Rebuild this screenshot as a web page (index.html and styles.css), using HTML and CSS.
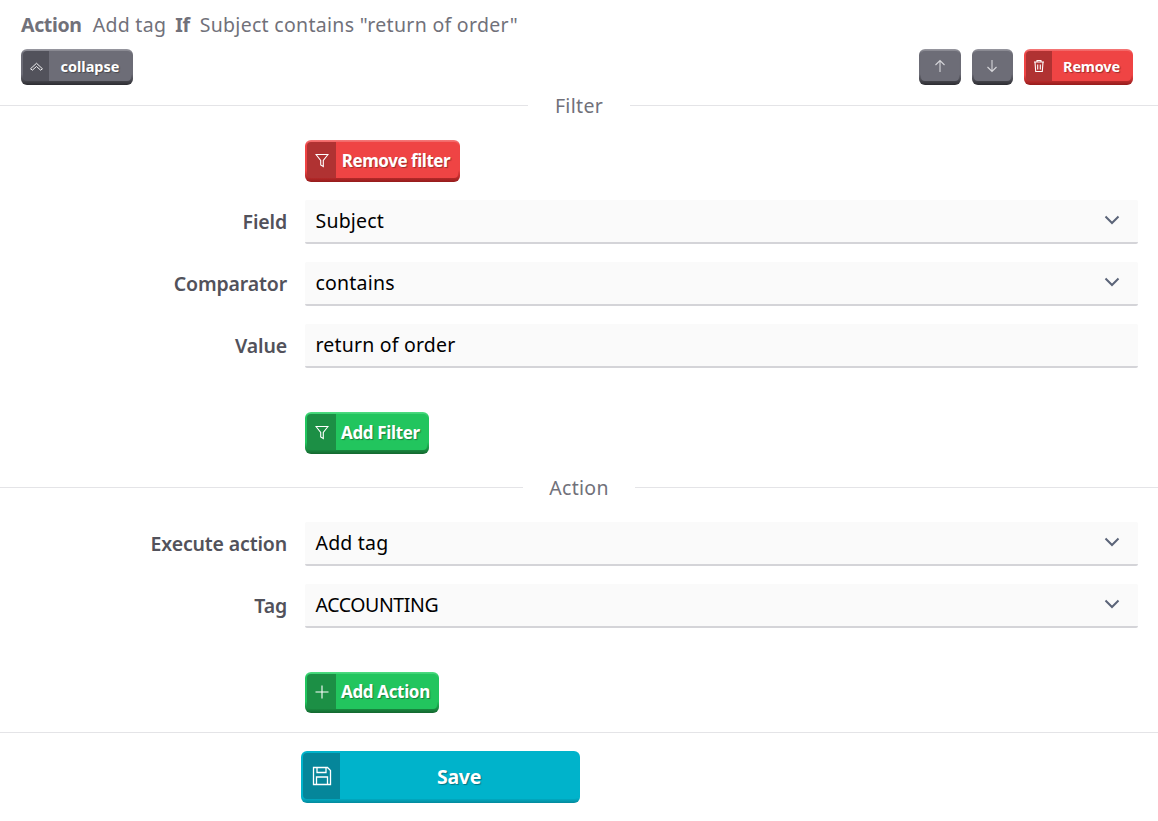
FILE: index.html
```html
<!DOCTYPE html>
<html lang="en">
<head>
<meta charset="utf-8">
<title>Action</title>
<link rel="stylesheet" href="styles.css">
</head>
<body>
<header class="head">
  <div class="summary"><b>Action</b><span>Add tag</span><b>If</b><span>Subject contains "return of order"</span></div>
  <div class="toolbar">
    <button class="btn gray small collapse"><span class="ico"><svg width="15" height="11" viewBox="0 0 16 12"><path d="M1.500 8.500 8 2.500l6.500 6-2 1.500L8 6l-4.500 4z" fill="none" stroke="#fff" stroke-width="1"/></svg></span><span class="txt">collapse</span></button>
    <div class="actions">
      <button class="btn gray small square"><span class="txt"><svg width="12" height="14" viewBox="0 0 12 14"><path d="M6 13V1.500M1.500 6 6 1.500 10.500 6" fill="none" stroke="#d6d6da" stroke-width="1.100"/></svg></span></button>
      <button class="btn gray small square"><span class="txt"><svg width="12" height="14" viewBox="0 0 12 14"><path d="M6 1v11.500M1.500 8 6 12.500 10.500 8" fill="none" stroke="#d6d6da" stroke-width="1.100"/></svg></span></button>
      <button class="btn red small remove"><span class="ico"><svg width="12" height="14" viewBox="0 0 12 14"><path d="M1 3h10M4 3V1.500h4V3M2 3l.7 9.500h6.600L10 3M4.700 5.500v5M7.300 5.500v5" fill="none" stroke="#fff" stroke-width="1.100"/></svg></span><span class="txt">Remove</span></button>
    </div>
  </div>
</header>

<div class="divider first"><span>Filter</span></div>

<section class="form filter">
  <div class="row btnrow"><button class="btn red big"><span class="ico"><svg width="14" height="15" viewBox="0 0 14 15"><path d="M1 1.500h12L8.300 7.500v6L5.700 12V7.500z" fill="none" stroke="#fff" stroke-width="1.100"/></svg></span><span class="txt">Remove filter</span></button></div>
  <div class="row field"><label>Field</label><div class="input">Subject<svg class="chev" width="16" height="10" viewBox="0 0 16 10"><path d="M1.500 1.500 8 8l6.500-6.500" fill="none" stroke="#5b6478" stroke-width="2"/></svg></div></div>
  <div class="row field"><label>Comparator</label><div class="input">contains<svg class="chev" width="16" height="10" viewBox="0 0 16 10"><path d="M1.500 1.500 8 8l6.500-6.500" fill="none" stroke="#5b6478" stroke-width="2"/></svg></div></div>
  <div class="row field"><label>Value</label><div class="input">return of order</div></div>
  <div class="row btnrow add"><button class="btn green big"><span class="ico"><svg width="14" height="15" viewBox="0 0 14 15"><path d="M1 1.500h12L8.300 7.500v6L5.700 12V7.500z" fill="none" stroke="#fff" stroke-width="1.100"/></svg></span><span class="txt">Add Filter</span></button></div>
</section>

<div class="divider second"><span>Action</span></div>

<section class="form action">
  <div class="row field"><label>Execute action</label><div class="input">Add tag<svg class="chev" width="16" height="10" viewBox="0 0 16 10"><path d="M1.500 1.500 8 8l6.500-6.500" fill="none" stroke="#5b6478" stroke-width="2"/></svg></div></div>
  <div class="row field"><label>Tag</label><div class="input upper">ACCOUNTING<svg class="chev" width="16" height="10" viewBox="0 0 16 10"><path d="M1.500 1.500 8 8l6.500-6.500" fill="none" stroke="#5b6478" stroke-width="2"/></svg></div></div>
  <div class="row btnrow add"><button class="btn green big short"><span class="ico"><svg width="14" height="14" viewBox="0 0 14 14"><path d="M7 0.500v13M0.500 7h13" fill="none" stroke="#fff" stroke-width="1.100"/></svg></span><span class="txt">Add Action</span></button></div>
</section>

<footer class="foot">
  <button class="btn teal save"><span class="ico"><svg width="20" height="20" viewBox="0 0 20 20"><path d="M1.500 1.500h14l3 3v14h-17zM5 1.500v5h9v-5M4.500 18.500v-7.500h11v7.500" fill="none" stroke="#fff" stroke-width="1.300"/></svg></span><span class="txt">Save</span></button>
</footer>
</body>
</html>
```
FILE: styles.css
```css
* { box-sizing: border-box; }
html, body { margin: 0; padding: 0; background: #fff; }
body { width: 1158px; height: 821px; overflow: hidden; font-family: "Noto Sans", "Open Sans", sans-serif; color: #000; }

.head { padding: 11px 25px 0 21px; }
.summary { display: flex; gap: 11px; height: 28px; padding-bottom: 2px; align-items: center; font-size: 19.500px; color: #71717a; white-space: nowrap; }
.summary b { font-weight: 700; letter-spacing: -.35px; }
.summary span { letter-spacing: .3px; }
.summary span + b { margin: 0 -1px 0 -2px; }
.toolbar { display: flex; justify-content: space-between; margin-top: 10px; }
.actions { display: flex; gap: 11px; }

.btn { display: inline-flex; align-items: stretch; padding: 2px 2px 4px; margin: 0; border: 0; border-radius: 6px; color: #fff; font-family: inherit; font-weight: 700; cursor: pointer; }
.btn .ico { display: flex; align-items: center; justify-content: center; border-radius: 4px 0 0 4px; }
.btn .txt { display: flex; align-items: center; justify-content: center; border-radius: 0 4px 4px 0; text-shadow: 1px 1px 1px rgba(0,0,0,.35); white-space: nowrap; }
.small { height: 36px; font-size: 14.500px; letter-spacing: -.2px; }
.big { height: 42px; font-size: 17px; letter-spacing: -.35px; }
.short { height: 41px; }

.gray { background: linear-gradient(#9a9aa2, #6c6c76 12%, #6c6c76 70%, #2c2c31); }
.gray .ico { background: #52525b; width: 26px; }
.gray .txt { background: #6d6d77; }
.collapse { width: 112px; letter-spacing: 0; }
.collapse .txt { flex: 1; }
.square { width: 41.500px; }
.square .txt { flex: 1; border-radius: 4px; }

.red { background: linear-gradient(#f47a7a, #ef4444 12%, #ef4444 72%, #951b1b); }
.red .ico { background: #b03232; }
.red .txt { background: #ef4444; }
.remove { width: 109px; }
.remove .ico { width: 26px; }
.remove .txt { flex: 1; }
.big .ico { width: 29px; }
.big .txt { padding: 0 7px 0 5px; }
.big.red { width: 155px; letter-spacing: -.45px; }
.big.red .txt { flex: 1; }

.green { background: linear-gradient(#4fdc82, #22c55e 12%, #22c55e 72%, #14672f); }
.green .ico { background: #1c8f45; }
.green .txt { background: #22c55e; }

.teal { background: linear-gradient(#00b3cb, #00b3cb 90%, #04899c); width: 279px; height: 52px; font-size: 19.500px; letter-spacing: -.3px; padding: 2px 2px 4px 2px; }
.teal .ico { background: #05869a; width: 37px; }
.teal .txt { background: #00b3cb; flex: 1; }

.divider { display: flex; align-items: center; height: 28px; color: #71717a; font-size: 19.500px; }
.divider::before, .divider::after { content: ""; flex: 1; height: 1px; background: #e4e4e7; }
.divider span { width: 102px; text-align: center; letter-spacing: .3px; }
.first { margin-top: 6px; }
.second { margin-top: 19px; }
.second span { width: 112px; }

.form { padding-right: 20px; }
.row { display: flex; align-items: center; }
.row label { width: 287px; margin-right: 18px; padding-bottom: 2px; text-align: right; font-size: 19.500px; font-weight: 600; color: #52525b; letter-spacing: -.15px; }
.btnrow { padding-left: 305px; }
.filter { padding-top: 21px; }
.action { padding-top: 21px; }
.field { margin-bottom: 18px; }
.filter .btnrow:first-child { margin-bottom: 18px; }
.add { margin-top: 44px; }
.input { flex: 1; height: 44px; padding: 0 18px 2px 10.500px; display: flex; align-items: center; justify-content: space-between; background: #fafafa; border-bottom: 2px solid #d4d4d8; border-radius: 2px; font-size: 19.500px; letter-spacing: .2px; color: #000; }
.upper { letter-spacing: -.4px; }
.chev { flex: none; }

.foot { margin-top: 19px; border-top: 1px solid #e4e4e7; padding: 18px 0 0 301px; }
```
